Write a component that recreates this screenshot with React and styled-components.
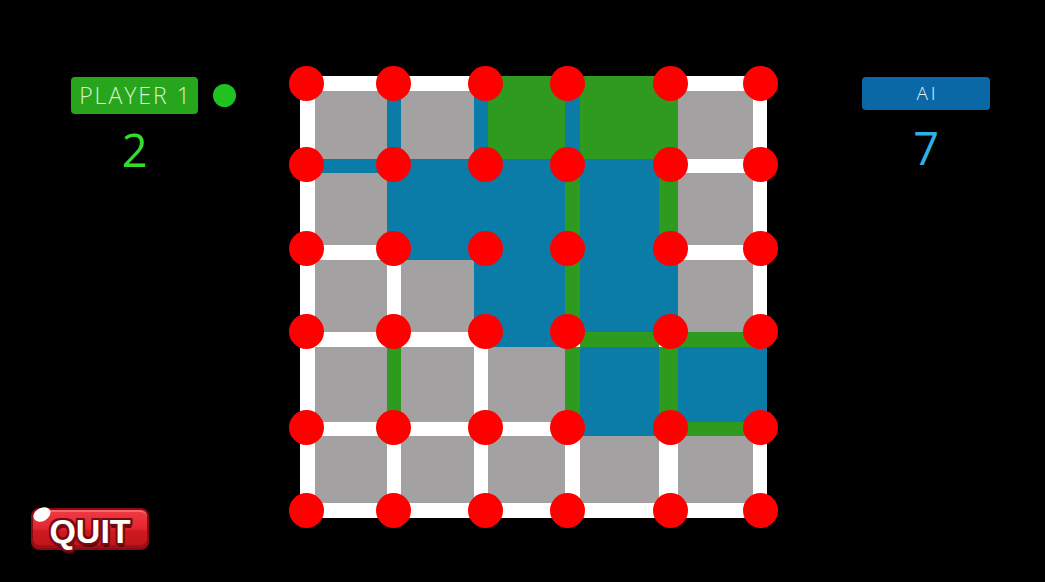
import React from 'react';
import styled, { createGlobalStyle } from 'styled-components';

const GlobalStyle = createGlobalStyle`
  html, body {
    margin: 0;
    background: #000;
  }
`;

// board tracks: line, cell, line, cell ... (px)
const COLS = [15, 72, 14, 73, 14, 77, 15, 79, 19, 75, 14];
const ROWS = [15, 68, 14, 72, 15, 72, 15, 75, 14, 67, 15];

// small drift of the dots against the lines, as in the game
const DOT_DX = [-1, -1, 4, -5, 2, 0];
const DOT_DY = [0, -2, -4, -8, -2, 0];

const CELLS = ['..GG.', '.BBB.', '..BB.', '...BB', '.....'];
const H_EDGES = ['..GG.', 'BBBB.', '.BBB.', '..BGG', '...BG', '.....'];
const V_EDGES = ['.BBBG.', '.BBGG.', '..BGB.', '.G.GGB', '......'];

const COLORS = {
  G: '#2e9b1f',
  B: '#0b7ba7',
};

const Screen = styled.div`
  display: flex;
  width: 1045px;
  height: 582px;
  background: #000;
  font-family: 'Open Sans', 'DejaVu Sans', sans-serif;
`;

const SidePanel = styled.div`
  display: flex;
  flex-direction: column;
  width: 300px;
  padding-top: 77px;
  box-sizing: border-box;
`;

const RightPanel = styled.div`
  display: flex;
  flex-direction: column;
  padding: 77px 0 0 95px;
`;

const PlayerHeader = styled.div`
  display: flex;
  align-items: center;
  gap: 15px;
  padding-left: 71px;
`;

const NameBadge = styled.div`
  display: flex;
  align-items: center;
  justify-content: center;
  width: ${({ $w }) => $w}px;
  height: ${({ $h }) => $h}px;
  padding-left: ${({ $spacing }) => $spacing}px;
  box-sizing: border-box;
  border-radius: 4px;
  background: ${({ $bg }) => $bg};
  color: ${({ $color }) => $color};
  font-size: ${({ $size }) => $size}px;
  font-weight: 300;
  letter-spacing: ${({ $spacing }) => $spacing}px;
  line-height: 1;
`;

const TurnDot = styled.span`
  width: 23px;
  height: 23px;
  border-radius: 50%;
  background: #1fc21f;
`;

const Score = styled.div`
  width: ${({ $w }) => $w}px;
  margin: ${({ $top }) => $top}px 0 0 ${({ $left }) => $left}px;
  text-align: center;
  color: ${({ $color }) => $color};
  font-size: 45px;
  font-weight: 400;
  line-height: 45px;
`;

const QuitButton = styled.button`
  position: relative;
  display: flex;
  align-items: center;
  justify-content: center;
  width: 118px;
  height: 42px;
  margin: auto 0 32px 31px;
  padding: 3px 0 0;
  box-sizing: border-box;
  border: 2px solid #8a0b12;
  border-radius: 8px;
  background: linear-gradient(#ef3b43 0%, #e3262f 48%, #d01a22 55%, #bf141b 100%);
  box-shadow: inset 0 -3px 0 #a00f16, inset 0 2px 0 rgba(255, 255, 255, 0.25);
  color: #fff;
  font: 700 34px 'Liberation Sans', Arial, sans-serif;
  line-height: 1;
  text-shadow:
    2px 0 #7a0a10, -2px 0 #7a0a10, 0 2px #7a0a10, 0 -2px #7a0a10,
    2px 2px #7a0a10, -2px -2px #7a0a10, 2px -2px #7a0a10, -2px 2px #7a0a10,
    1px 4px #5a0509;
  cursor: pointer;

  &::before {
    content: '';
    position: absolute;
    left: 0;
    top: -2px;
    width: 18px;
    height: 13px;
    border-radius: 50%;
    background: #fff;
    transform: rotate(-30deg);
  }
`;

const Board = styled.div`
  display: grid;
  grid-template-columns: ${COLS.map((v) => `${v}px`).join(' ')};
  grid-template-rows: ${ROWS.map((v) => `${v}px`).join(' ')};
  margin-top: 76px;
  align-self: flex-start;
`;

const Box = styled.div`
  background: ${({ $fill }) => $fill || '#a3a1a2'};
`;

const Edge = styled.div`
  background: ${({ $fill }) => $fill || '#ffffff'};
`;

const Node = styled.div`
  display: flex;
  align-items: center;
  justify-content: center;
  background: #ffffff;
  z-index: 2;
`;

const Dot = styled.span`
  flex-shrink: 0;
  width: 35px;
  height: 35px;
  border-radius: 50%;
  background: #ff0000;
  transform: translate(${({ $dx }) => $dx}px, ${({ $dy }) => $dy}px);
`;

function GameBoard() {
  const parts = [];
  for (let r = 0; r < 11; r++) {
    for (let c = 0; c < 11; c++) {
      const key = `${r}-${c}`;
      const row = r >> 1;
      const col = c >> 1;
      if (r % 2 === 0 && c % 2 === 0) {
        parts.push(
          <Node key={key}>
            <Dot $dx={DOT_DX[col]} $dy={DOT_DY[row]} />
          </Node>
        );
      } else if (r % 2 === 0) {
        parts.push(<Edge key={key} $fill={COLORS[H_EDGES[row][col]]} />);
      } else if (c % 2 === 0) {
        parts.push(<Edge key={key} $fill={COLORS[V_EDGES[row][col]]} />);
      } else {
        parts.push(<Box key={key} $fill={COLORS[CELLS[row][col]]} />);
      }
    }
  }
  return <Board>{parts}</Board>;
}

export default function App() {
  return (
    <>
      <GlobalStyle />
      <Screen>
        <SidePanel>
          <PlayerHeader>
            <NameBadge $w={127} $h={37} $size={23} $spacing={2} $bg="#27a51c" $color="#d6f2cf">
              PLAYER 1
            </NameBadge>
            <TurnDot />
          </PlayerHeader>
          <Score $w={127} $left={71} $top={13} $color="#35dd2b">
            2
          </Score>
          <QuitButton>QUIT</QuitButton>
        </SidePanel>
        <GameBoard />
        <RightPanel>
          <NameBadge $w={128} $h={33} $size={19} $spacing={3} $bg="#0b68a6" $color="#e3f0f8">
            AI
          </NameBadge>
          <Score $w={128} $left={0} $top={15} $color="#2fb0e6">
            7
          </Score>
        </RightPanel>
      </Screen>
    </>
  );
}
